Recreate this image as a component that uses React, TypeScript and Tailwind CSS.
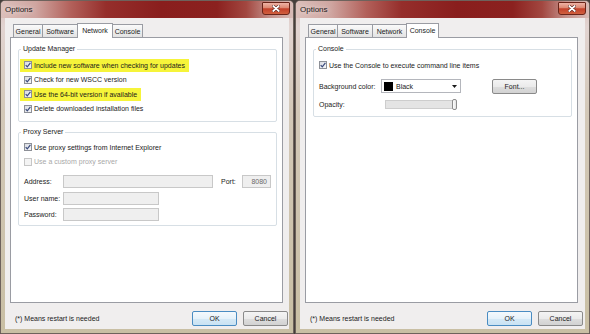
import React from "react";

type TabDef = { label: string; w: string; selected?: boolean };

function Check({ checked = true, disabled = false }: { checked?: boolean; disabled?: boolean }) {
  return (
    <span
      className={`inline-flex w-[8px] h-[8px] shrink-0 items-center justify-center border ${
        disabled
          ? "border-[#c6c6c6] bg-[#f4f4f4]"
          : "border-[#8d9097] bg-[linear-gradient(135deg,#d9dce3,#f6f7f9)]"
      }`}
    >
      {checked && (
        <svg width="6" height="6" viewBox="0 0 6 6">
          <path d="M0.7 3.1 L2.3 4.9 L5.4 0.8" fill="none" stroke="#3a4a7c" strokeWidth="1.2" />
        </svg>
      )}
    </span>
  );
}

function CheckRow({
  label,
  highlight = false,
  checked = true,
  disabled = false,
}: {
  label: string;
  highlight?: boolean;
  checked?: boolean;
  disabled?: boolean;
}) {
  return (
    <div className="h-[14.5px] flex items-center">
      <div
        className={`h-[13px] flex items-center gap-[2px] pl-[4px] pr-[4px] ${
          highlight ? "bg-[#f6f43a]" : ""
        } ${disabled ? "text-[#a8a8a8]" : ""}`}
      >
        <Check checked={checked} disabled={disabled} />
        <span className="whitespace-nowrap">{label}</span>
      </div>
    </div>
  );
}

function Group({ title, children, className = "" }: { title: string; children: React.ReactNode; className?: string }) {
  return (
    <fieldset className={`border border-[#d7dfe5] rounded-[2px] ${className}`}>
      <legend className="ml-[2px] px-[2px] leading-[8px]">{title}</legend>
      {children}
    </fieldset>
  );
}

function Input({ w, value }: { w: string; value?: string }) {
  return (
    <div
      className={`${w} h-[13px] border border-[#c8c8c8] bg-[#efefef] flex items-center justify-end pr-[3px] text-[#6a6a6a]`}
    >
      {value}
    </div>
  );
}

function Button({ label, primary = false, className = "" }: { label: string; primary?: boolean; className?: string }) {
  return (
    <div
      className={`h-[15px] flex items-center justify-center rounded-[2px] border ${
        primary
          ? "border-[#4a8cc2] bg-[linear-gradient(180deg,#f4f9fd_0%,#e6f2fa_50%,#d5e9f6_51%,#c9e2f3_100%)]"
          : "border-[#8a8a8a] bg-[linear-gradient(180deg,#f4f4f4_0%,#ebebeb_50%,#dedede_51%,#d2d2d2_100%)]"
      } ${className}`}
    >
      {label}
    </div>
  );
}

function Tab({ t, first }: { t: TabDef; first: boolean }) {
  if (t.selected) {
    return (
      <div
        className={`${t.w} -ml-[1px] h-[15px] relative z-10 bg-white border border-b-0 border-[#9a9ca3] flex items-center justify-center pb-[2px]`}
      >
        {t.label}
      </div>
    );
  }
  return (
    <div
      className={`${t.w} ${first ? "" : "-ml-[1px]"} mt-[1px] h-[13px] border border-b-0 border-[#9a9ca3] bg-[linear-gradient(180deg,#fafafa,#e3e3e3)] flex items-center justify-center`}
    >
      {t.label}
    </div>
  );
}

function CloseButton() {
  return (
    <div className="w-[28px] h-[13px] mt-[1px] rounded-b-[3px] rounded-t-[1px] border border-[#6a2419] bg-[linear-gradient(180deg,#eeb3a6_0%,#dc8670_45%,#c3402a_52%,#d0603f_100%)] flex items-center justify-center">
      <svg width="8" height="7" viewBox="0 0 8 7">
        <path d="M1 0.8 L7 6.2 M7 0.8 L1 6.2" stroke="#5b1f16" strokeWidth="3" strokeLinecap="round" />
        <path d="M1.2 1 L6.8 6 M6.8 1 L1.2 6" stroke="#ffffff" strokeWidth="1.7" strokeLinecap="round" />
      </svg>
    </div>
  );
}

function Window({
  width,
  tabs,
  children,
}: {
  width: string;
  tabs: TabDef[];
  children: React.ReactNode;
}) {
  return (
    <div
      className={`${width} h-[334px] shrink-0 flex flex-col border border-[#6e625c] rounded-t-[5px] bg-[linear-gradient(180deg,#dcc3bf_0px,#e2d4d1_26px,#d3c8b8_110px,#c9bfa4_100%)]`}
    >
      <div className="h-[17px] shrink-0 flex items-start justify-between pl-[4px] pr-[3px] rounded-t-[4px] bg-[linear-gradient(90deg,#dbbfba_0%,#cfa5a0_12%,#b2605a_24%,#952e2b_36%,#891e1d_55%,#8b211f_74%,#a24740_84%,#c4908a_92%,#d8bcb7_100%)]">
        <span className="text-[8px] leading-[17px] text-[#1a1a1a] [text-shadow:0_0_5px_rgba(255,255,255,0.9)]">
          Options
        </span>
        <CloseButton />
      </div>
      <div className="flex-1 mx-[4px] mb-[4px] bg-[#f0eeee] flex flex-col">
        <div className="w-[278px] ml-[5px] flex flex-col flex-1 pt-[5px]">
          <div className="h-[14px] flex items-start pl-[3px]">
            {tabs.map((t, i) => (
              <Tab key={t.label} t={t} first={i === 0} />
            ))}
          </div>
          <div className="w-[273px] h-[266px] bg-white border border-[#9a9ca3] pt-[7px] pl-[7px] pr-[5px]">
            {children}
          </div>
          <div className="h-[26px] flex items-start pt-[8px] pl-[5px]">
            <span className="h-[15px] flex items-center flex-1">(*) Means restart is needed</span>
            <Button label="OK" primary className="w-[45px]" />
            <Button label="Cancel" className="w-[45px] ml-[6px]" />
          </div>
        </div>
      </div>
    </div>
  );
}

function NetworkPanel() {
  return (
    <div>
      <Group title="Update Manager">
        <div className="pt-[5px] pb-[5px] pl-[1px]">
          <CheckRow label="Include new software when checking for updates" highlight />
          <CheckRow label="Check for new WSCC version" />
          <CheckRow label="Use the 64-bit version if available" highlight />
          <CheckRow label="Delete downloaded installation files" />
        </div>
      </Group>
      <Group title="Proxy Server" className="mt-[6px]">
        <div className="pt-[4px] pl-[1px]">
          <CheckRow label="Use proxy settings from Internet Explorer" />
          <CheckRow label="Use a custom proxy server" checked={false} disabled />
        </div>
        <div className="mt-[6px] pl-[5px] pb-[4px] flex flex-col gap-[3.5px]">
          <div className="flex items-center h-[13px]">
            <span className="w-[39px]">Address:</span>
            <Input w="w-[150px]" />
            <span className="w-[21px] ml-[8px]">Port:</span>
            <Input w="w-[29px]" value="8080" />
          </div>
          <div className="flex items-center h-[13px]">
            <span className="w-[39px]">User name:</span>
            <Input w="w-[96px]" />
          </div>
          <div className="flex items-center h-[13px]">
            <span className="w-[39px]">Password:</span>
            <Input w="w-[96px]" />
          </div>
        </div>
      </Group>
    </div>
  );
}

function ConsolePanel() {
  return (
    <div>
      <Group title="Console">
        <div className="pt-[5px] pb-[6px] pl-[1px]">
          <CheckRow label="Use the Console to execute command line items" />
          <div className="mt-[6.75px] h-[14px] flex items-center pl-[4px]">
            <span className="w-[62px]">Background color:</span>
            <div className="w-[80px] h-[14px] border border-[#b4b6bc] bg-white flex items-center pl-[2px] pr-[3px]">
              <span className="w-[9px] h-[9px] bg-black" />
              <span className="ml-[3px] flex-1">Black</span>
              <svg width="5" height="3" viewBox="0 0 5 3">
                <path d="M0 0 H5 L2.5 3 Z" fill="#1a1a1a" />
              </svg>
            </div>
            <Button label="Font..." className="ml-[31px] w-[45px] h-[14px]" />
          </div>
          <div className="mt-[6px] h-[11px] flex items-center pl-[4px]">
            <span className="w-[66px]">Opacity:</span>
            <div className="relative w-[72px] h-[11px]">
              <div className="w-[68px] h-[9px] mt-[1px] bg-[#e4e4e4] border border-[#cdcdcd]" />
              <div className="absolute right-0 top-0 w-[5px] h-[11px] rounded-[2px] border border-[#8c8c8c] bg-[linear-gradient(90deg,#ffffff,#e2e2e2)]" />
            </div>
          </div>
        </div>
      </Group>
    </div>
  );
}

export default function App() {
  return (
    <div className="w-[590px] h-[334px] flex gap-[1px] bg-[#453f3b] overflow-hidden font-['Liberation_Sans',Arial,sans-serif] text-[7px] leading-[9px] text-[#1b1b1b]">
      <Window
        width="w-[294px]"
        tabs={[
          { label: "General", w: "w-[30px]" },
          { label: "Software", w: "w-[36px]" },
          { label: "Network", w: "w-[36px]", selected: true },
          { label: "Console", w: "w-[31px]" },
        ]}
      >
        <NetworkPanel />
      </Window>
      <Window
        width="w-[295px]"
        tabs={[
          { label: "General", w: "w-[30px]" },
          { label: "Software", w: "w-[36px]" },
          { label: "Network", w: "w-[35px]" },
          { label: "Console", w: "w-[33px]", selected: true },
        ]}
      >
        <ConsolePanel />
      </Window>
    </div>
  );
}
